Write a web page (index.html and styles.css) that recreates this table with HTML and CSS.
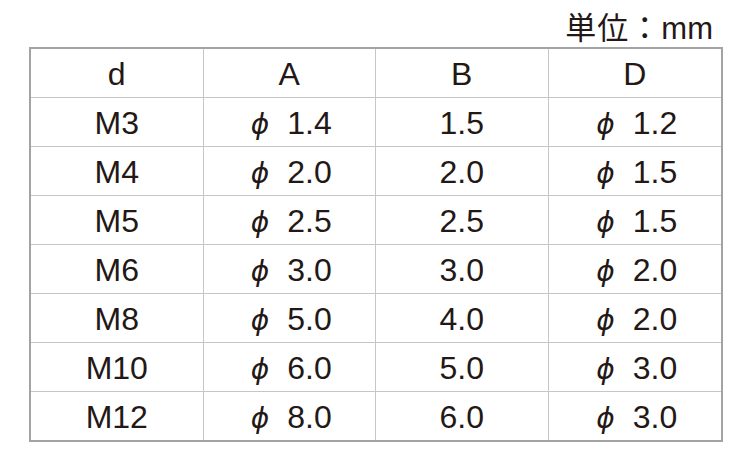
FILE: index.html
```html
<!DOCTYPE html>
<html lang="ja">
<head>
<meta charset="utf-8">
<link rel="stylesheet" href="styles.css">
</head>
<body>
<div class="unit"><span class="jp">単位：</span><span class="mm">mm</span></div>
<div class="tbl">
  <div class="c">d</div><div class="c">A</div><div class="c">B</div><div class="c">D</div>
  <div class="c">M3</div><div class="c"><span class="phi">ϕ</span> 1.4</div><div class="c">1.5</div><div class="c"><span class="phi">ϕ</span> 1.2</div>
  <div class="c">M4</div><div class="c"><span class="phi">ϕ</span> 2.0</div><div class="c">2.0</div><div class="c"><span class="phi">ϕ</span> 1.5</div>
  <div class="c">M5</div><div class="c"><span class="phi">ϕ</span> 2.5</div><div class="c">2.5</div><div class="c"><span class="phi">ϕ</span> 1.5</div>
  <div class="c">M6</div><div class="c"><span class="phi">ϕ</span> 3.0</div><div class="c">3.0</div><div class="c"><span class="phi">ϕ</span> 2.0</div>
  <div class="c">M8</div><div class="c"><span class="phi">ϕ</span> 5.0</div><div class="c">4.0</div><div class="c"><span class="phi">ϕ</span> 2.0</div>
  <div class="c">M10</div><div class="c"><span class="phi">ϕ</span> 6.0</div><div class="c">5.0</div><div class="c"><span class="phi">ϕ</span> 3.0</div>
  <div class="c last">M12</div><div class="c last"><span class="phi">ϕ</span> 8.0</div><div class="c last">6.0</div><div class="c last"><span class="phi">ϕ</span> 3.0</div>
</div>
</body>
</html>
```
FILE: styles.css
```css
html, body {
  margin: 0;
  padding: 0;
  background: #ffffff;
}
body {
  width: 750px;
  height: 450px;
  overflow: hidden;
  color: #231815;
  font-family: "Liberation Sans", Arial, "Noto Sans CJK JP", sans-serif;
}
.unit {
  height: 47px;
  box-sizing: border-box;
  width: 722px;
  text-align: right;
  padding-right: 9px;
  line-height: 52px;
  white-space: nowrap;
}
.jp {
  font-family: "Noto Sans CJK JP", sans-serif;
  font-size: 31px;
  letter-spacing: 1px;
}
.mm {
  font-family: "Liberation Sans", Arial, sans-serif;
  font-size: 31px;
}
.tbl {
  margin-left: 29px;
  width: 694px;
  box-sizing: border-box;
  border: 2px solid #a3a3a3;
  display: grid;
  grid-template-columns: repeat(4, 1fr);
}
.c {
  height: 49px;
  box-sizing: border-box;
  border-bottom: 1px solid #c6c6c6;
  border-right: 1px solid #c6c6c6;
  text-align: center;
  font-size: 32px;
  line-height: 45px;
  padding-top: 3px;
}
.c:nth-child(4n) {
  border-right: none;
}
.c.last {
  border-bottom: none;
  height: 48px;
}
.phi {
  font-family: "DejaVu Sans", sans-serif;
  font-style: italic;
  font-size: 28px;
  margin-right: 9px;
  margin-left: 4px;
}
```
